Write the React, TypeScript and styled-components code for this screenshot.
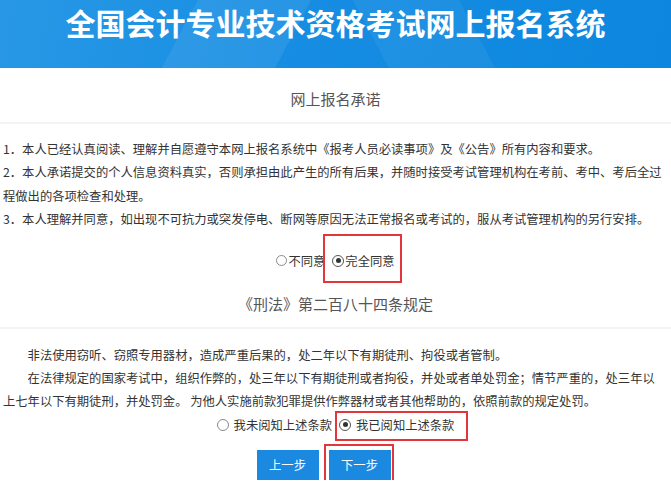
import { FunctionComponent, ReactNode } from "react";
import styled, { createGlobalStyle } from "styled-components";

const GlobalStyle = createGlobalStyle`
  body {
    margin: 0;
    background: #fff;
    font-family: "Noto Sans CJK SC", "Noto Sans", sans-serif;
    color: #333;
  }
`;

const Banner = styled.header`
  height: 68px;
  background:
    linear-gradient(118deg, transparent 28%, rgba(255, 255, 255, 0.07) 28%, rgba(255, 255, 255, 0.07) 44%, transparent 44%),
    linear-gradient(62deg, transparent 55%, rgba(255, 255, 255, 0.05) 55%, rgba(255, 255, 255, 0.05) 70%, transparent 70%),
    linear-gradient(100deg, #2898e5 0%, #168de2 45%, #0c86df 100%);
  text-align: center;
`;

const BannerTitle = styled.h1`
  margin: 0;
  color: #fff;
  font-size: 30px;
  font-weight: 700;
  line-height: 44px;
`;

const SectionTitle = styled.h2<{ $top?: number; $bottom?: number }>`
  margin: 0;
  padding: ${({ $top }) => $top ?? 22}px 0 ${({ $bottom }) => $bottom ?? 14}px;
  text-align: center;
  font-size: 15px;
  font-weight: 400;
  line-height: 18px;
  color: #555;
  border-bottom: 2px solid #f3f3f3;
`;

const Terms = styled.div<{ $top: number; $indent?: boolean }>`
  padding: ${({ $top }) => $top}px 6px 0 3px;
  font-size: 12.3px;
  line-height: 23.4px;
  color: #333;
  p {
    margin: 0;
    text-indent: ${({ $indent }) => ($indent ? "2em" : "0")};
  }
`;

const RadioRow = styled.div<{ $top: number; $height: number }>`
  display: flex;
  justify-content: center;
  align-items: center;
  gap: 7px;
  margin-top: ${({ $top }) => $top}px;
  height: ${({ $height }) => $height}px;
  font-size: 12.3px;
  color: #333;
`;

type Box = { top: number; right: number; bottom: number; left: number };

const Option = styled.label<{ $gap: number; $box?: Box }>`
  position: relative;
  display: inline-flex;
  align-items: center;
  gap: ${({ $gap }) => $gap}px;
  height: 16px;
  white-space: nowrap;
  ${({ $box }) =>
    $box &&
    `
    &::after {
      content: "";
      position: absolute;
      top: -${$box.top}px;
      right: -${$box.right}px;
      bottom: -${$box.bottom}px;
      left: -${$box.left}px;
      border: 2px solid #e3363b;
      pointer-events: none;
    }
  `}
`;

const Radio = styled.input.attrs({ type: "radio" })<{ $size: number }>`
  appearance: none;
  margin: 0;
  width: ${({ $size }) => $size}px;
  height: ${({ $size }) => $size}px;
  border: 1px solid #8a8a8a;
  border-radius: 50%;
  background: #fff;
  box-sizing: border-box;
  display: grid;
  place-items: center;
  &:checked {
    border-color: #555;
  }
  &:checked::before {
    content: "";
    width: 5px;
    height: 5px;
    border-radius: 50%;
    background: #333;
  }
`;

const Buttons = styled.div`
  display: flex;
  justify-content: center;
  gap: 10px;
  margin-top: 14px;
  padding-right: 24px;
`;

const ButtonWrap = styled.div<{ $marked?: boolean }>`
  position: relative;
  ${({ $marked }) =>
    $marked &&
    `
    &::after {
      content: "";
      position: absolute;
      top: -6px;
      right: -3px;
      bottom: -3px;
      left: -5px;
      border: 2px solid #e3363b;
      pointer-events: none;
    }
  `}
`;

const StepButton = styled.button`
  width: 62px;
  height: 30px;
  border: none;
  background: #1c89e0;
  color: #fff;
  font-family: inherit;
  font-size: 12.3px;
  cursor: pointer;
`;

type ChoiceProps = {
  name: string;
  label: ReactNode;
  checked?: boolean;
  size: number;
  gap: number;
  box?: Box;
};

const Choice: FunctionComponent<ChoiceProps> = ({ name, label, checked, size, gap, box }) => (
  <Option $gap={gap} $box={box}>
    <Radio name={name} $size={size} defaultChecked={checked} />
    {label}
  </Option>
);

const App: FunctionComponent = () => (
  <>
    <GlobalStyle />
    <Banner>
      <BannerTitle>全国会计专业技术资格考试网上报名系统</BannerTitle>
    </Banner>

    <SectionTitle>网上报名承诺</SectionTitle>
    <Terms $top={14}>
      <p>1．本人已经认真阅读、理解并自愿遵守本网上报名系统中《报考人员必读事项》及《公告》所有内容和要求。</p>
      <p>
        2．本人承诺提交的个人信息资料真实，否则承担由此产生的所有后果，并随时接受考试管理机构在考前、考中、考后全过程做出的各项检查和处理。
      </p>
      <p>3．本人理解并同意，如出现不可抗力或突发停电、断网等原因无法正常报名或考试的，服从考试管理机构的另行安排。</p>
    </Terms>

    <RadioRow $top={17} $height={24}>
      <Choice name="promise" label="不同意" size={11} gap={1} />
      <Choice
        name="promise"
        label="完全同意"
        size={12}
        gap={1}
        checked
        box={{ top: 19, right: 7, bottom: 14, left: 9 }}
      />
    </RadioRow>

    <SectionTitle $top={22} $bottom={14}>《刑法》第二百八十四条规定</SectionTitle>
    <Terms $top={15} $indent>
      <p>非法使用窃听、窃照专用器材，造成严重后果的，处二年以下有期徒刑、拘役或者管制。</p>
      <p>
        在法律规定的国家考试中，组织作弊的，处三年以下有期徒刑或者拘役，并处或者单处罚金；情节严重的，处三年以上七年以下有期徒刑，并处罚金。 为他人实施前款犯罪提供作弊器材或者其他帮助的，依照前款的规定处罚。
      </p>
    </Terms>

    <RadioRow $top={0} $height={22}>
      <Choice name="law" label="我未阅知上述条款" size={12} gap={5} />
      <Choice
        name="law"
        label="我已阅知上述条款"
        size={12}
        gap={5}
        checked
        box={{ top: 6, right: 14, bottom: 8, left: 4 }}
      />
    </RadioRow>

    <Buttons>
      <ButtonWrap>
        <StepButton>上一步</StepButton>
      </ButtonWrap>
      <ButtonWrap $marked>
        <StepButton>下一步</StepButton>
      </ButtonWrap>
    </Buttons>
  </>
);

export default App;
